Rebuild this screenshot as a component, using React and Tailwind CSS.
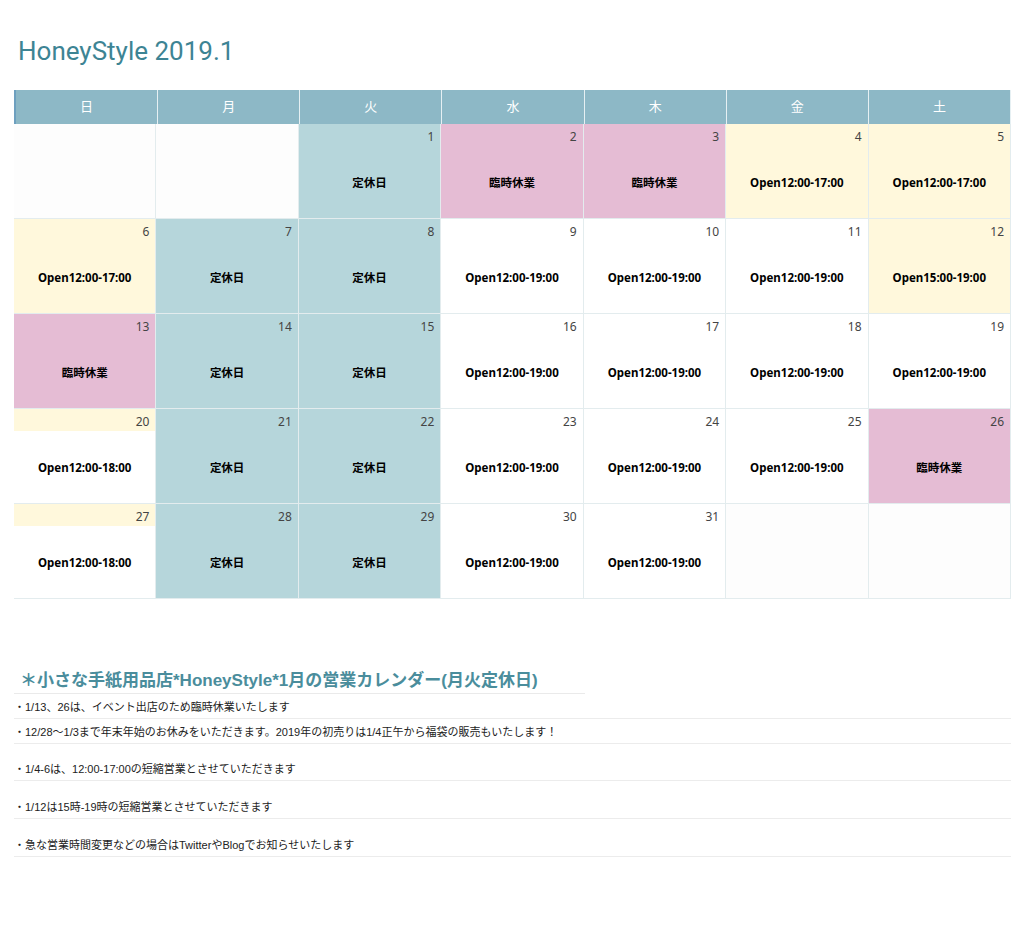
const T='bg-[#b6d6db]',P='bg-[#e5bcd4]',Y='bg-[#fff8dc]',W='bg-white',E='bg-[#fdfdfd]';
const c=(n,l,bg,band)=>({n,l,bg,band});
const o9='Open12:00-19:00';
const rows=[
[c(null,'',E),c(null,'',E),c(1,'定休日',T),c(2,'臨時休業',P),c(3,'臨時休業',P),c(4,'Open12:00-17:00',Y),c(5,'Open12:00-17:00',Y)],
[c(6,'Open12:00-17:00',Y),c(7,'定休日',T),c(8,'定休日',T),c(9,o9,W),c(10,o9,W),c(11,o9,W),c(12,'Open15:00-19:00',Y)],
[c(13,'臨時休業',P),c(14,'定休日',T),c(15,'定休日',T),c(16,o9,W),c(17,o9,W),c(18,o9,W),c(19,o9,W)],
[c(20,'Open12:00-18:00',W,true),c(21,'定休日',T),c(22,'定休日',T),c(23,o9,W),c(24,o9,W),c(25,o9,W),c(26,'臨時休業',P)],
[c(27,'Open12:00-18:00',W,true),c(28,'定休日',T),c(29,'定休日',T),c(30,o9,W),c(31,o9,W),c(null,'',E),c(null,'',E)],
];
const notes=[['・1/13、26は、イベント出店のため臨時休業いたします','h-[25px]'],['・12/28〜1/3まで年末年始のお休みをいただきます。2019年の初売りは1/4正午から福袋の販売もいたします！','h-[25px]'],['・1/4-6は、12:00-17:00の短縮営業とさせていただきます','h-[37px]'],['・1/12は15時-19時の短縮営業とさせていただきます','h-[38px]'],['・急な営業時間変更などの場合はTwitterやBlogでお知らせいたします','h-[38px]']];
export default function App(){return(
<div className="w-[1024px] h-[952px] bg-white" style={{fontFamily:'"Noto Sans","Noto Sans CJK JP",sans-serif'}}>
<div className="pt-[33px] pl-[18px] h-[90px] text-[26px] text-[#3d8494] leading-[36px]" style={{fontFamily:'Roboto,"Noto Sans CJK JP",sans-serif'}}>HoneyStyle 2019.1</div>
<div className="ml-[14px] w-[997px]">
<div className="grid grid-cols-7 h-[34px] bg-[#8db8c6] border-l-2 border-[#6ea0bf]">
{['日','月','火','水','木','金','土'].map(d=><div key={d} className="flex items-center justify-center text-white text-[13px] border-r border-[#e6f0f3]">{d}</div>)}
</div>
<div className="grid grid-cols-7">
{rows.flat().map((x,i)=><div key={i} className={`relative h-[95px] border-r border-b border-[#e3ecee] ${x.bg}`}>
{x.band&&<div className="absolute top-0 left-0 right-0 h-[22px] bg-[#fff8dc]"/>}
{x.n&&<div className="relative text-right pr-[6px] pt-[5px] text-[12px] text-[#444] leading-[16px]">{x.n}</div>}
{x.l&&<div className="absolute left-0 right-0 top-[49px] text-center text-[11.5px] font-bold text-black leading-[20px]">{x.l}</div>}
</div>)}
</div>
</div>
<div className="mt-[70px] ml-[14px] w-[997px]" style={{fontFamily:'"Liberation Sans","Noto Sans CJK JP",sans-serif'}}>
<div className="w-[571px] h-[25px] border-b border-[#eaeaea] pl-[6px] text-[17px] font-bold text-[#4a8d9c] leading-[24px]">＊小さな手紙用品店*HoneyStyle*1月の営業カレンダー(月火定休日)</div>
{notes.map(([t,h],i)=><div key={i} className={`${h} border-b border-[#ececec] flex items-end pb-[3px] text-[11px] text-[#222]`}>{t}</div>)}
</div>
</div>)}
